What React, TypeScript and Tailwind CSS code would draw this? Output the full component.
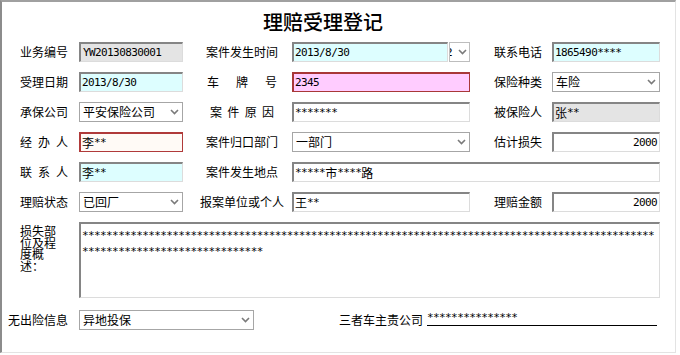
import { FC, ReactNode } from "react";

const sunken =
	"border-t-2 border-l-2 border-t-[#858585] border-l-[#858585] border-r border-b border-r-[#dcdcdc] border-b-[#dcdcdc]";

// ascii runs get a narrow mono face (6px per char, like the old bitmap font)
const Txt: FC<{ s: string }> = ({ s }) => (
	<>
		{s.match(/[\x00-\x7f]+|[^\x00-\x7f]+/g)?.map((run, i) =>
			/^[\x00-\x7f]/.test(run) ? (
				<span
					key={i}
					className="font-['DejaVu_Sans_Mono',monospace] text-[11px] tracking-[-0.6px]"
				>
					{run}
				</span>
			) : (
				<span key={i} className="text-[12px]">
					{run}
				</span>
			),
		)}
	</>
);

const Chevron: FC = () => (
	<svg width="9" height="6" viewBox="0 0 9 6" className="shrink-0">
		<path d="M1 1 L4.5 4.5 L8 1" fill="none" stroke="#7a7a7a" strokeWidth="1.6" />
	</svg>
);

const Box: FC<{ className: string; value?: string; right?: boolean }> = ({
	className,
	value = "",
	right,
}) => (
	<div
		className={
			"flex h-5 items-center overflow-hidden whitespace-nowrap leading-none text-black " +
			(right ? "justify-end pr-[2px] " : "pl-[1px] ") +
			className
		}
	>
		<Txt s={value} />
	</div>
);

const Select: FC<{ className: string; value: string }> = ({ className, value }) => (
	<div
		className={
			"flex h-5 items-center justify-between border border-[#a6a6a6] bg-white pl-[3px] pr-[3px] leading-none " +
			className
		}
	>
		<span className="text-[12px]">{value}</span>
		<Chevron />
	</div>
);

const Spread: FC<{ className: string; chars: string }> = ({ className, chars }) => (
	<div className={"flex justify-between text-[12px] leading-none " + className}>
		{chars.split("").map((c, i) => (
			<span key={i}>{c}</span>
		))}
	</div>
);

const Row: FC<{ children: ReactNode }> = ({ children }) => (
	<div className="flex h-5 items-center pl-[18px]">{children}</div>
);

const L1: FC<{ children: ReactNode }> = ({ children }) => (
	<div className="w-[48px] text-[12px] leading-none">{children}</div>
);
const L2: FC<{ children: ReactNode }> = ({ children }) => (
	<div className="ml-[12px] flex w-[94px] justify-center whitespace-nowrap text-[12px] leading-none">
		{children}
	</div>
);
const L3: FC<{ children: ReactNode }> = ({ children }) => (
	<div className="ml-[24px] w-[48px] text-[12px] leading-none">{children}</div>
);

const stars = (n: number) => "*".repeat(n);

export default function App() {
	return (
		<div className="h-[355px] w-[680px] bg-white font-['Noto_Sans_CJK_SC',sans-serif] text-black">
			<div className="flex h-[353px] w-[676px] flex-col border-t-2 border-l-2 border-r border-b border-t-[#a0a0a0] border-l-[#8c8c8c] border-r-[#e3e3e3] border-b-[#e3e3e3]">
				<div className="flex h-[40px] items-center pl-[261px] text-[20px] font-medium leading-none">
					理赔受理登记
				</div>

				<div className="flex flex-col gap-[10px]">
					<Row>
						<L1>业务编号</L1>
						<Box className={"ml-[11px] w-[104px] bg-[#e4e4e4] pl-[2px] " + sunken} value="YW20130830001" />
						<L2>案件发生时间</L2>
						<div className="ml-[3px] flex w-[178px]">
							<Box className={"w-[156px] bg-[#ddfeff] " + sunken} value="2013/8/30" />
							<div className="ml-[1px] flex h-5 w-[21px] items-center overflow-hidden border border-[#bdbdbd] bg-white leading-none">
								<span className="ml-[-4px] font-['DejaVu_Sans_Mono',monospace] text-[11px]">2</span>
								<span className="ml-[5px]">
									<Chevron />
								</span>
							</div>
						</div>
						<L3>联系电话</L3>
						<Box className={"ml-[10px] w-[108px] bg-[#ddfeff] " + sunken} value="1865490****" />
					</Row>

					<Row>
						<L1>受理日期</L1>
						<Box className={"ml-[11px] w-[104px] bg-[#ddfeff] " + sunken} value="2013/8/30" />
						<L2>
							<Spread className="w-[70px]" chars="车牌号" />
						</L2>
						<Box
							className="ml-[3px] w-[178px] border-t-2 border-l-2 border-r border-b border-[#a83838] bg-[#ffccff]"
							value="2345"
						/>
						<L3>保险种类</L3>
						<Select className="ml-[10px] w-[108px]" value="车险" />
					</Row>

					<Row>
						<L1>承保公司</L1>
						<Select className="ml-[11px] w-[104px]" value="平安保险公司" />
						<L2>
							<Spread className="w-[64px]" chars="案件原因" />
						</L2>
						<Box className={"ml-[3px] w-[178px] bg-white " + sunken} value="*******" />
						<L3>被保险人</L3>
						<Box className={"ml-[10px] w-[108px] bg-[#e4e4e4] " + sunken} value="张**" />
					</Row>

					<Row>
						<L1>
							<Spread className="w-[48px]" chars="经办人" />
						</L1>
						<Box
							className="ml-[11px] w-[104px] border-t-2 border-l-2 border-r border-b border-[#b03a3a] bg-[#fffaf6]"
							value="李**"
						/>
						<L2>案件归口部门</L2>
						<Select className="ml-[3px] w-[178px]" value="一部门" />
						<L3>估计损失</L3>
						<Box className={"ml-[10px] w-[108px] bg-white " + sunken} value="2000" right />
					</Row>

					<Row>
						<L1>
							<Spread className="w-[48px]" chars="联系人" />
						</L1>
						<Box className={"ml-[11px] w-[104px] bg-[#ddfeff] " + sunken} value="李**" />
						<L2>案件发生地点</L2>
						<Box className={"ml-[3px] w-[368px] bg-white " + sunken} value="*****市****路" />
					</Row>

					<Row>
						<L1>理赔状态</L1>
						<Select className="ml-[11px] w-[104px]" value="已回厂" />
						<L2>报案单位或个人</L2>
						<Box className={"ml-[3px] w-[178px] bg-white " + sunken} value="王**" />
						<L3>理赔金额</L3>
						<Box className={"ml-[10px] w-[108px] bg-white " + sunken} value="2000" right />
					</Row>

					<div className="flex pl-[18px]">
						<div className="w-[36px] break-all pt-[3px] text-[12px] leading-[11.5px]">
							损失部位及程度概述：
						</div>
						<div className={"ml-[23px] h-[76px] w-[581px] overflow-hidden bg-white pl-[1px] pt-[2px] leading-[12px] " + sunken}>
							<div className="whitespace-nowrap">
								<Txt s={stars(95)} />
							</div>
							<div className="whitespace-nowrap">
								<Txt s={stars(30)} />
							</div>
						</div>
					</div>
				</div>

				<div className="mt-[12px] flex h-5 items-center pl-[6px]">
					<div className="w-[60px] text-[12px] leading-none">无出险信息</div>
					<Select className="ml-[11px] w-[175px]" value="异地投保" />
					<div className="ml-[85px] whitespace-nowrap text-[12px] leading-none">三者车主责公司</div>
					<div className="ml-[4px] flex h-[16px] w-[230px] items-center self-start border-b border-black leading-none">
						<Txt s={stars(15)} />
					</div>
				</div>
			</div>
		</div>
	);
}
